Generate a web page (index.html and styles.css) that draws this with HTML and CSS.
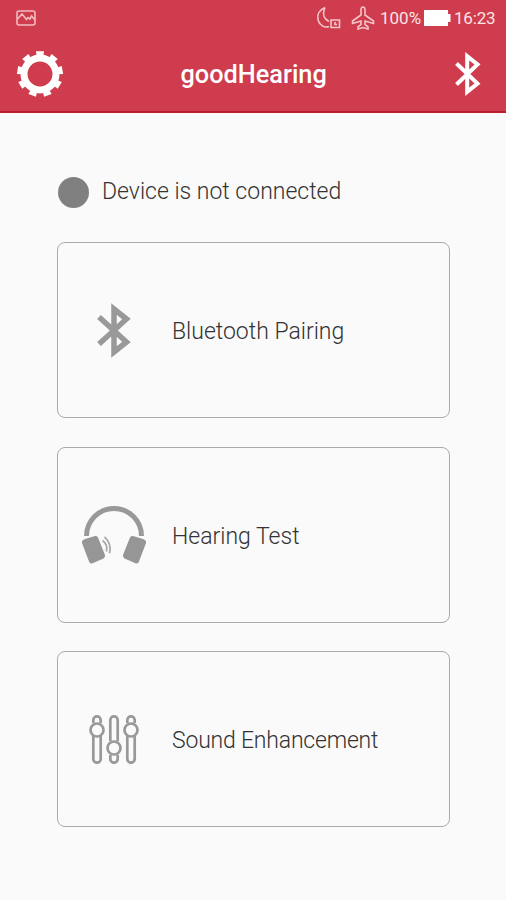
FILE: index.html
```html
<!DOCTYPE html>
<html lang="en">
<head>
<meta charset="utf-8">
<title>goodHearing</title>
<link rel="stylesheet" href="styles.css">
</head>
<body>
<header class="top">
  <div class="status">
    <svg class="picture" width="20" height="16" viewBox="0 0 20 16"><rect x="1" y="1" width="18" height="14" rx="2"/><path d="M1.500 9l4.500-5 4.500 5.500 1.500-2 2 1.500 1.500-3 3.500 4"/></svg>
    <svg class="moon" width="26" height="24" viewBox="0 0 26 24"><path d="M9 1.500C3 4 .5 9 2.200 14.500S9 22 13 20.500M9 1.500C6 8 8 13 13 15.500"/><path d="M15 14h8.500v7.500H15zM19 16v2.500h2"/></svg>
    <svg class="plane" width="24" height="24" viewBox="0 0 24 24"><path d="M12 1c-1.200 0-2 1.500-2 3v5l-8.500 6v2.500L10 15v3.500l-3 2.300V23l5-1.500 5 1.500v-2.200l-3-2.300V15l8.500 2.500V15L14 9V4c0-1.500-.8-3-2-3z"/></svg>
    <span class="percent">100%</span>
    <svg class="battery" width="27" height="18" viewBox="0 0 27 18"><path d="M0 1h24v4h2.500v8H24v4H0z"/></svg>
    <span class="time">16:23</span>
  </div>
  <div class="bar">
    <svg class="gear" width="48" height="48" viewBox="-24 -24 48 48">
      <circle r="16" />
      <path id="tooth" d="M-4-22.800h8l-.8 6h-6.400z"/>
      <use href="#tooth" transform="rotate(40)"/><use href="#tooth" transform="rotate(80)"/><use href="#tooth" transform="rotate(120)"/><use href="#tooth" transform="rotate(160)"/><use href="#tooth" transform="rotate(200)"/><use href="#tooth" transform="rotate(240)"/><use href="#tooth" transform="rotate(280)"/><use href="#tooth" transform="rotate(320)"/>
    </svg>
    <h1>goodHearing</h1>
    <svg class="bt" width="26" height="44" viewBox="0 0 26 44"><path d="M1.500 11.500L22.500 31.500 12.200 39.800V4.200L22.500 12.500 1.500 32.500"/></svg>
  </div>
</header>
<main>
  <div class="device"><i class="dot"></i><span>Device is not connected</span></div>
  <section class="card">
    <div class="icon"><svg class="bt gray" width="36" height="58" viewBox="0 0 36 58"><path d="M3 16L30.500 41 18 51V8L30.500 18 3 43"/></svg></div>
    <span class="pairing">Bluetooth Pairing</span>
  </section>
  <section class="card">
    <div class="icon"><svg width="66" height="60" viewBox="0 0 66 60"><path class="band" d="M5.500 31A27.500 27.500 0 0 1 60.500 31"/><path class="cup" d="M4 34L14 31Q16.500 30.500 17.200 33L24 50Q24.500 52 22.500 53.500L11 58.500Q8.700 59 8 56.500L1 38Q.5 35 4 34zM62 34L52 31Q49.500 30.500 48.800 33L42 50Q41.500 52 43.500 53.500L55 58.500Q57.300 59 58 56.500L65 38Q65.500 35 62 34z"/><path class="wave" d="M21.500 35.500q5.500 4 4 11M23.500 31.800q7.500 7 5 16.500"/></svg></div>
    <span class="test">Hearing Test</span>
  </section>
  <section class="card">
    <div class="icon"><svg class="sliders" width="50" height="50" viewBox="0 0 50 50"><path d="M4.300 9V6a3.700 3.700 0 0 1 7.400 0v3M4.300 22v23a3.700 3.700 0 0 0 7.400 0V22M21.300 27V6a3.700 3.700 0 0 1 7.400 0v21M21.300 41v4a3.700 3.700 0 0 0 7.400 0v-4M38.300 9V6a3.700 3.700 0 0 1 7.400 0v3M38.300 22v23a3.700 3.700 0 0 0 7.400 0V22"/><circle cx="8" cy="16" r="6.500"/><circle cx="25" cy="34" r="6.500"/><circle cx="42" cy="16" r="6.500"/></svg></div>
    <span class="sound">Sound Enhancement</span>
  </section>
</main>
</body>
</html>
```
FILE: styles.css
```css
* { box-sizing: border-box; }
body { margin: 0; height: 900px; background: #fafafa; color: #333; font-family: Roboto, "Liberation Sans", sans-serif; }
svg { display: block; flex: none; fill: none; }
.top { height: 113px; background: #ce3c4d; color: #fff; border-bottom: 2px solid #b91d2c; }
.status { height: 36px; display: flex; align-items: center; padding: 0 10px 0 16px; font-size: 17px; color: #fbe3e4; white-space: nowrap; }
.picture { stroke: #f2bcc1; stroke-width: 1.600; }
.moon { margin-left: 280px; stroke: #f4c5c9; stroke-width: 1.600; }
.plane { margin-left: 9px; stroke: #f4c5c9; stroke-width: 1.600; }
.percent { width: 41px; margin-left: 5px; }
.battery { margin-left: 3px; fill: #fff; }
.time { margin-left: 3px; letter-spacing: -.2px; }
.bar { height: 76px; display: flex; align-items: center; justify-content: space-between; padding: 0 25px 0 16px; }
.gear { fill: #fff; }
.gear circle { fill: none; stroke: #fff; stroke-width: 7; }
h1 { margin: 1px 0 0 -11px; font-size: 25.300px; font-weight: 500; line-height: 30px; width: 147px; white-space: nowrap; }
.bt { stroke: #fff; stroke-width: 4; }
.bt.gray { stroke: #999; stroke-width: 5.500; }
main { padding: 61px 56px 0 57px; font-size: 23px; font-weight: 300; line-height: 30px; }
.device { height: 36px; display: flex; align-items: center; margin-bottom: 32px; }
.dot { width: 31px; height: 31px; border-radius: 50%; background: #808080; margin: 0 13px 0 1px; }
.card { height: 176px; display: flex; align-items: center; border: 1.500px solid #aaa; border-radius: 8px; margin-bottom: 28.500px; }
.card > span { padding-top: 3px; }
.card .test { padding-top: 4px; }
.card .sound { letter-spacing: -.2px; }
.icon { width: 114px; padding-right: 2px; display: flex; justify-content: center; }
.band { stroke: #999; stroke-width: 5; }
.cup { fill: #969696; }
.wave { stroke: #aaa; stroke-width: 1.800; }
.sliders { stroke: #999; stroke-width: 2.700; }
```
